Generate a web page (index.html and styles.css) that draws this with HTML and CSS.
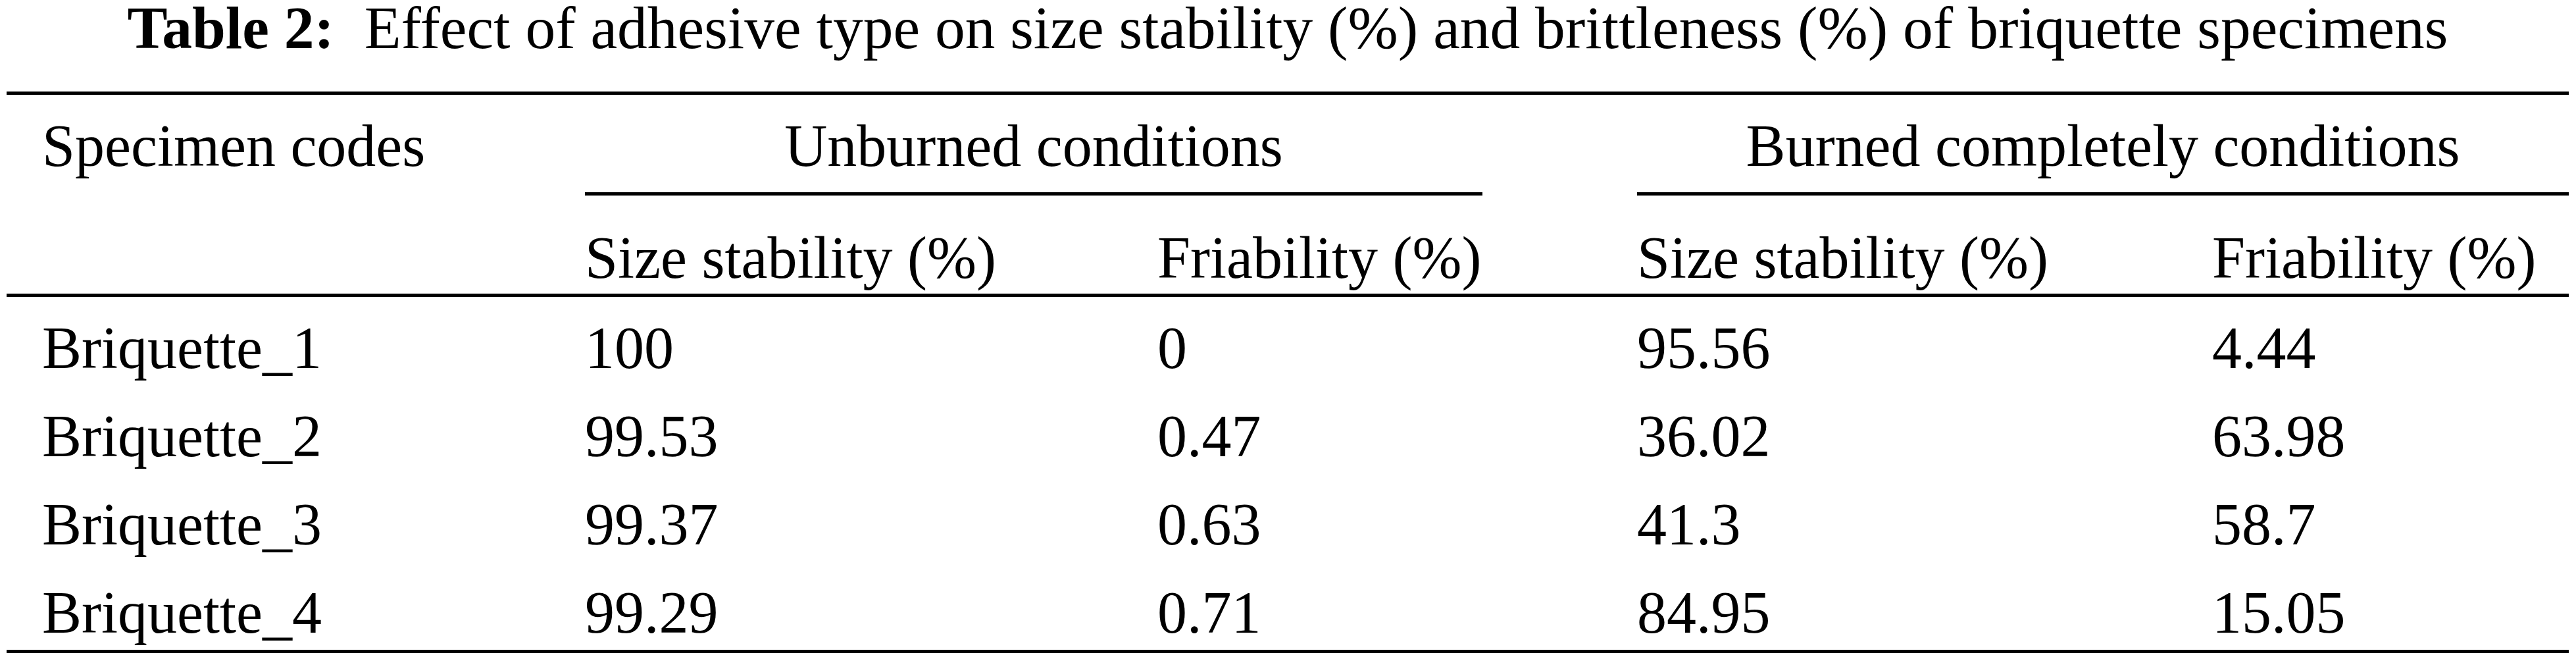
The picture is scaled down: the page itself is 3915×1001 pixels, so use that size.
FILE: index.html
```
<!DOCTYPE html>
<html lang="en">
<head>
<meta charset="utf-8">
<title>Table 2</title>
<link rel="stylesheet" href="styles.css">
</head>
<body>
<div class="figure">
  <p class="caption"><b class="caption-label">Table 2:</b>&nbsp; Effect of adhesive type on size stability (%) and brittleness (%) of briquette specimens</p>
  <table class="data">
    <colgroup>
      <col class="col-code">
      <col class="col-u-size">
      <col class="col-u-fri">
      <col class="col-b-size">
      <col class="col-b-fri">
    </colgroup>
    <thead>
      <tr>
        <th rowspan="2" class="stub">Specimen codes</th>
        <th colspan="2" class="group"><div class="group-label group-label--gap">Unburned conditions</div></th>
        <th colspan="2" class="group"><div class="group-label">Burned completely conditions</div></th>
      </tr>
      <tr>
        <th class="sub">Size stability (%)</th>
        <th class="sub">Friability (%)</th>
        <th class="sub">Size stability (%)</th>
        <th class="sub">Friability (%)</th>
      </tr>
    </thead>
    <tbody>
      <tr><td class="code">Briquette_1</td><td>100</td><td>0</td><td>95.56</td><td>4.44</td></tr>
      <tr><td class="code">Briquette_2</td><td>99.53</td><td>0.47</td><td>36.02</td><td>63.98</td></tr>
      <tr><td class="code">Briquette_3</td><td>99.37</td><td>0.63</td><td>41.3</td><td>58.7</td></tr>
      <tr><td class="code">Briquette_4</td><td>99.29</td><td>0.71</td><td>84.95</td><td>15.05</td></tr>
    </tbody>
  </table>
</div>
</body>
</html>
```
FILE: styles.css
```
html, body {
  margin: 0;
  padding: 0;
  background: #ffffff;
}

body {
  color: #000000;
  font-family: "Liberation Serif", serif;
}

.figure {
  padding-left: 10px;
}

.caption {
  margin: 0;
  width: 3894px;
  font-family: "Liberation Serif", serif;
  font-size: 91.5px;
  line-height: 85px;
  text-align: center;
  white-space: nowrap;
}

.caption-label {
  font-family: "Liberation Serif", serif;
  font-weight: bold;
}

.data {
  margin-top: 54px;
  width: 3894px;
  table-layout: fixed;
  border-collapse: separate;
  border-spacing: 0;
  border-top: 5px solid #000;
  border-bottom: 5px solid #000;
  font-family: "Liberation Serif", serif;
  font-size: 90px;
  line-height: 90px;
  white-space: nowrap;
}

.col-code { width: 879px; }
.col-u-size { width: 870px; }
.col-u-fri { width: 729px; }
.col-b-size { width: 874px; }
.col-b-fri { width: 542px; }

.data th,
.data td {
  font-family: "Liberation Serif", serif;
  font-weight: normal;
  text-align: left;
  padding: 0;
}

.data .stub {
  vertical-align: top;
  padding-top: 33px;
  padding-left: 54px;
  border-bottom: 5px solid #000;
}

.data .group {
  vertical-align: top;
}

.group-label {
  text-align: center;
  padding-top: 33px;
  padding-bottom: 25px;
  border-bottom: 5px solid #000;
}

.group-label--gap {
  margin-right: 235px;
}

.data .sub {
  padding-top: 50px;
  padding-bottom: 9px;
  border-bottom: 5px solid #000;
}

.data td {
  padding-top: 33px;
  padding-bottom: 11px;
}

.data td.code {
  padding-left: 54px;
}
```
